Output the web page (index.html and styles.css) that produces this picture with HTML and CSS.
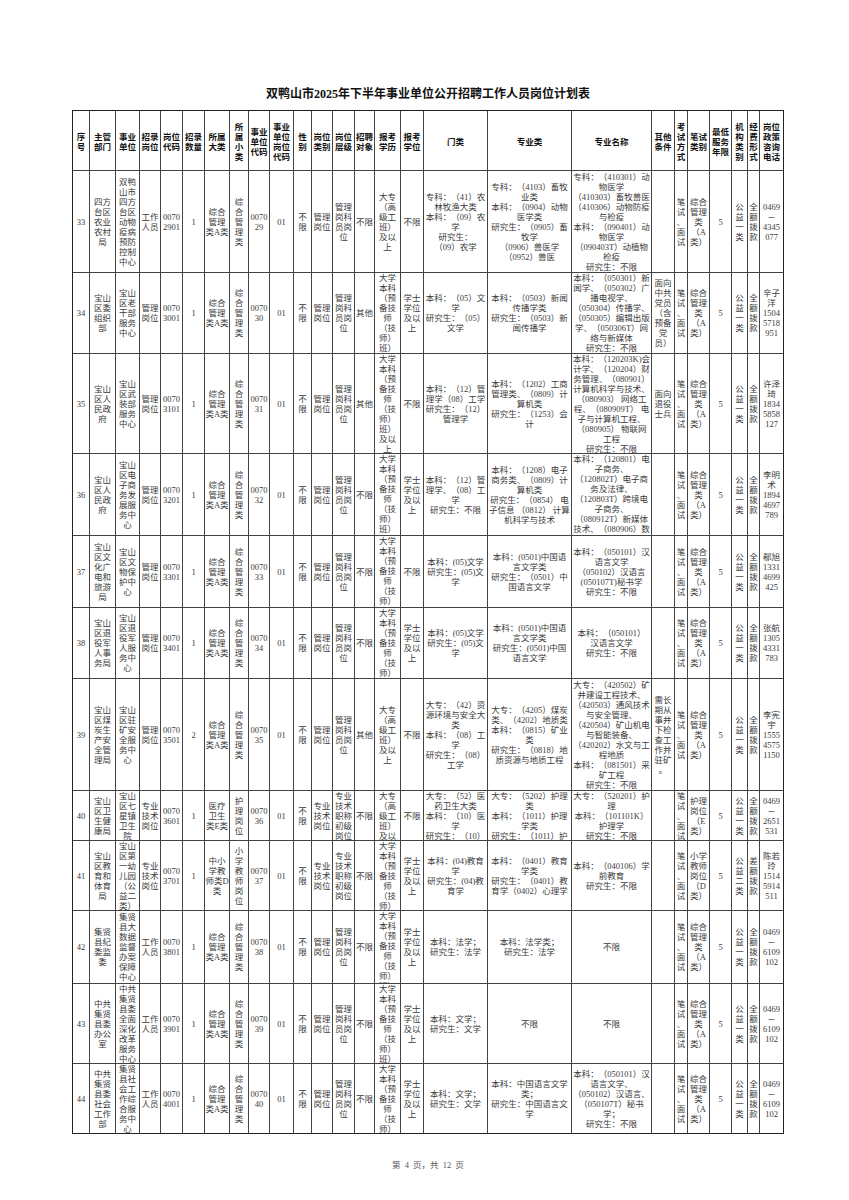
FILE: index.html
```html
<!DOCTYPE html>
<html lang="zh-CN">
<head>
<meta charset="utf-8">
<title>双鸭山市2025年下半年事业单位公开招聘工作人员岗位计划表</title>
<link rel="stylesheet" href="styles.css">
</head>
<body>
<div class="page">
  <h1 class="title">双鸭山市2025年下半年事业单位公开招聘工作人员岗位计划表</h1>
  <div class="tbl">
    <div class="h">序<br>号</div>
    <div class="h">主管<br>部门</div>
    <div class="h">事业<br>单位</div>
    <div class="h">招录<br>岗位</div>
    <div class="h">岗位<br>代码</div>
    <div class="h">招录<br>数量</div>
    <div class="h">所属<br>大类</div>
    <div class="h">所<br>属<br>小<br>类</div>
    <div class="h">事业<br>单位<br>代码</div>
    <div class="h">事业<br>单位<br>岗位<br>代码</div>
    <div class="h">性<br>别</div>
    <div class="h">岗位<br>类别</div>
    <div class="h">岗位<br>层级</div>
    <div class="h">招聘<br>对象</div>
    <div class="h">报考<br>学历</div>
    <div class="h">报考<br>学位</div>
    <div class="h">门类</div>
    <div class="h">专业类</div>
    <div class="h">专业名称</div>
    <div class="h">其他<br>条件</div>
    <div class="h">考<br>试<br>方<br>式</div>
    <div class="h">笔试<br>类别</div>
    <div class="h">最低<br>服务<br>年限</div>
    <div class="h">机<br>构<br>类<br>别</div>
    <div class="h">经<br>费<br>形<br>式</div>
    <div class="h">岗位<br>政策<br>咨询<br>电话</div>

    <!-- 33 -->
    <div>33</div>
    <div>四方台区农业农村局</div>
    <div>双鸭山市四方台区动物疫病预防控制中心</div>
    <div>工作人员</div>
    <div>0070<br>2901</div>
    <div>1</div>
    <div>综合管理类A类</div>
    <div>综合管理类</div>
    <div>0070<br>29</div>
    <div>01</div>
    <div>不限</div>
    <div>管理岗位</div>
    <div>管理岗科员岗位</div>
    <div>不限</div>
    <div>大专（高级工班）及以上</div>
    <div>不限</div>
    <div>专科：（41）农林牧渔大类<br>本科：（09）农学<br>研究生：<br>（09）农学</div>
    <div>专科：（4103）畜牧业类<br>本科：（0904）动物医学类<br>研究生：（0905）畜牧学<br>（0906）兽医学<br>（0952）兽医</div>
    <div>专科：（410301）动物医学<br>（410303）畜牧兽医<br>（410306）动物防疫与检疫<br>本科：（090401）动物医学<br>（090403T）动植物检疫<br>研究生：不限</div>
    <div></div>
    <div>笔试、面试</div>
    <div>综合管理类（A类）</div>
    <div>5</div>
    <div>公益一类</div>
    <div>全额拨款</div>
    <div>0469<br>－<br>4345<br>077</div>

    <!-- 34 -->
    <div>34</div>
    <div>宝山区委组织部</div>
    <div>宝山区老干部服务中心</div>
    <div>管理岗位</div>
    <div>0070<br>3001</div>
    <div>1</div>
    <div>综合管理类A类</div>
    <div>综合管理类</div>
    <div>0070<br>30</div>
    <div>01</div>
    <div>不限</div>
    <div>管理岗位</div>
    <div>管理岗科员岗位</div>
    <div>其他</div>
    <div>大学本科（预备技师（技师）班）及以上</div>
    <div>学士学位及以上</div>
    <div>本科：（05）文学<br>研究生：（05）文学</div>
    <div>本科：（0503）新闻传播学类<br>研究生：（0503）新闻传播学</div>
    <div>本科：（050301）新闻学、（050302）广播电视学、（050304）传播学、（050305）编辑出版学、（050306T）网络与新媒体<br>研究生：不限</div>
    <div>面向中共党员（含预备党员）</div>
    <div>笔试、面试</div>
    <div>综合管理类（A类）</div>
    <div>5</div>
    <div>公益一类</div>
    <div>全额拨款</div>
    <div>辛子洋<br>1504<br>5718<br>951</div>

    <!-- 35 -->
    <div>35</div>
    <div>宝山区人民政府</div>
    <div>宝山区武装部服务中心</div>
    <div>管理岗位</div>
    <div>0070<br>3101</div>
    <div>1</div>
    <div>综合管理类A类</div>
    <div>综合管理类</div>
    <div>0070<br>31</div>
    <div>01</div>
    <div>不限</div>
    <div>管理岗位</div>
    <div>管理岗科员岗位</div>
    <div>其他</div>
    <div>大学本科（预备技师（技师）班）及以上</div>
    <div>不限</div>
    <div>本科：（12）管理学（08）工学<br>研究生：（12）管理学</div>
    <div>本科：（1202）工商管理类、（0809）计算机类<br>研究生：（1253）会计</div>
    <div>本科：（120203K)会计学、（120204）财务管理、（080901）计算机科学与技术、（080903） 网络工程、（080909T） 电子与计算机工程、（080905） 物联网工程<br>研究生：不限</div>
    <div>面向退役士兵</div>
    <div>笔试、面试</div>
    <div>综合管理类（A类）</div>
    <div>5</div>
    <div>公益一类</div>
    <div>全额拨款</div>
    <div>许泽琦<br>1834<br>5858<br>127</div>

    <!-- 36 -->
    <div>36</div>
    <div>宝山区人民政府</div>
    <div>宝山区电子商务发展服务中心</div>
    <div>管理岗位</div>
    <div>0070<br>3201</div>
    <div>1</div>
    <div>综合管理类A类</div>
    <div>综合管理类</div>
    <div>0070<br>32</div>
    <div>01</div>
    <div>不限</div>
    <div>管理岗位</div>
    <div>管理岗科员岗位</div>
    <div>不限</div>
    <div>大学本科（预备技师（技师）班）及以上</div>
    <div>学士学位及以上</div>
    <div>本科：（12）管理学、（08）工学<br>研究生：不限</div>
    <div>本科：（1208）电子商务类、（0809）计算机类<br>研究生：（0854） 电子信息 （0812） 计算机科学与技术</div>
    <div>本科：（120801）电子商务、（120802T）电子商务及法律、（120803T）跨境电子商务、（080912T）新媒体技术、（080906）数字媒体技术<br>研究生：不限</div>
    <div></div>
    <div>笔试、面试</div>
    <div>综合管理类（A类）</div>
    <div>5</div>
    <div>公益一类</div>
    <div>全额拨款</div>
    <div>李明术<br>1894<br>4697<br>789</div>

    <!-- 37 -->
    <div>37</div>
    <div>宝山区文化广电和旅游局</div>
    <div>宝山区文物保护中心</div>
    <div>管理岗位</div>
    <div>0070<br>3301</div>
    <div>1</div>
    <div>综合管理类A类</div>
    <div>综合管理类</div>
    <div>0070<br>33</div>
    <div>01</div>
    <div>不限</div>
    <div>管理岗位</div>
    <div>管理岗科员岗位</div>
    <div>不限</div>
    <div>大学本科（预备技师（技师）班）及以上</div>
    <div>不限</div>
    <div>本科：(05)文学<br>研究生：(05)文学</div>
    <div>本科：(0501)中国语言文学类<br>研究生：（0501）中国语言文学</div>
    <div>本科：（050101）汉语言文学<br>（050102）汉语言<br>(050107T)秘书学<br>研究生：不限</div>
    <div></div>
    <div>笔试、面试</div>
    <div>综合管理类（A类）</div>
    <div>5</div>
    <div>公益一类</div>
    <div>全额拨款</div>
    <div>郗旭<br>1331<br>4699<br>425</div>

    <!-- 38 -->
    <div>38</div>
    <div>宝山区退役军人事务局</div>
    <div>宝山区退役军人服务中心</div>
    <div>管理岗位</div>
    <div>0070<br>3401</div>
    <div>1</div>
    <div>综合管理类A类</div>
    <div>综合管理类</div>
    <div>0070<br>34</div>
    <div>01</div>
    <div>不限</div>
    <div>管理岗位</div>
    <div>管理岗科员岗位</div>
    <div>不限</div>
    <div>大学本科（预备技师（技师）班）及以上</div>
    <div>学士学位及以上</div>
    <div>本科：(05)文学<br>研究生：(05)文学</div>
    <div>本科：(0501)中国语言文学类<br>研究生：(0501)中国语言文学</div>
    <div>本科：（050101）<br>汉语言文学<br>研究生：不限</div>
    <div></div>
    <div>笔试、面试</div>
    <div>综合管理类（A类）</div>
    <div>5</div>
    <div>公益一类</div>
    <div>全额拨款</div>
    <div>张航<br>1305<br>4331<br>783</div>

    <!-- 39 -->
    <div>39</div>
    <div>宝山区煤炭生产安全管理局</div>
    <div>宝山区驻矿安全服务中心</div>
    <div>管理岗位</div>
    <div>0070<br>3501</div>
    <div>2</div>
    <div>综合管理类A类</div>
    <div>综合管理类</div>
    <div>0070<br>35</div>
    <div>01</div>
    <div>不限</div>
    <div>管理岗位</div>
    <div>管理岗科员岗位</div>
    <div>其他</div>
    <div>大专（高级工班）及以上</div>
    <div>不限</div>
    <div>大专：（42）资源环境与安全大类<br>本科：（08）工学<br>研究生：（08）工学</div>
    <div>大专：（4205）煤炭类、（4202）地质类<br>本科：（0815）矿业类<br>研究生：（0818）地质资源与地质工程</div>
    <div>大专：（420502）矿井建设工程技术、（420503）通风技术与安全管理、（420504）矿山机电与智能装备、（420202）水文与工程地质<br>本科：（081501）采矿工程<br>研究生：不限</div>
    <div>需长期从事井下检查工作并驻矿<br>。</div>
    <div>笔试、面试</div>
    <div>综合管理类（A类）</div>
    <div>5</div>
    <div>公益一类</div>
    <div>全额拨款</div>
    <div>李宪宇<br>1555<br>4575<br>1150</div>

    <!-- 40 -->
    <div>40</div>
    <div>宝山区卫生健康局</div>
    <div>宝山区七星镇卫生院</div>
    <div>专业技术岗位</div>
    <div>0070<br>3601</div>
    <div>1</div>
    <div>医疗卫生类E类</div>
    <div>护理岗位</div>
    <div>0070<br>36</div>
    <div>01</div>
    <div>不限</div>
    <div>专业技术岗位</div>
    <div>专业技术职称初级岗位</div>
    <div>不限</div>
    <div>大专（高级工班）及以上</div>
    <div>不限</div>
    <div>大专：（52）医药卫生大类<br>本科：（10）医学<br>研究生：（10）医学</div>
    <div>大专：（5202）护理类<br>本科：（1011）护理学类<br>研究生：（1011）护理学</div>
    <div>大专：（520201）护理<br>本科：（101101K）<br>护理学<br>研究生：不限</div>
    <div></div>
    <div>笔试、面试</div>
    <div>护理岗位（E类）</div>
    <div>5</div>
    <div>公益一类</div>
    <div>全额拨款</div>
    <div>0469<br>－<br>2651<br>531</div>

    <!-- 41 -->
    <div>41</div>
    <div>宝山区教育和体育局</div>
    <div>宝山区第一幼儿园（公益二类）</div>
    <div>专业技术岗位</div>
    <div>0070<br>3701</div>
    <div>1</div>
    <div>中小学教师类D类</div>
    <div>小学教师岗位</div>
    <div>0070<br>37</div>
    <div>01</div>
    <div>不限</div>
    <div>专业技术岗位</div>
    <div>专业技术职称初级岗位</div>
    <div>不限</div>
    <div>大学本科（预备技师（技师）班）及以上</div>
    <div>学士学位及以上</div>
    <div>本科：(04)教育学<br>研究生：(04)教育学</div>
    <div>本科：（0401）教育学类<br>研究生：（0401）教育学（0402）心理学</div>
    <div>本科：（040106）学前教育<br>研究生：不限</div>
    <div></div>
    <div>笔试、面试</div>
    <div>小学教师岗位（D类）</div>
    <div>5</div>
    <div>公益二类</div>
    <div>差额拨款</div>
    <div>陈若玲<br>1514<br>5914<br>511</div>

    <!-- 42 -->
    <div>42</div>
    <div>集贤县纪委监委</div>
    <div>集贤县大数据监督办案保障中心</div>
    <div>工作人员</div>
    <div>0070<br>3801</div>
    <div>1</div>
    <div>综合管理类A类</div>
    <div>综合管理类</div>
    <div>0070<br>38</div>
    <div>01</div>
    <div>不限</div>
    <div>管理岗位</div>
    <div>管理岗科员岗位</div>
    <div>不限</div>
    <div>大学本科（预备技师（技师）班）及以上</div>
    <div>学士学位及以上</div>
    <div>本科：法学；<br>研究生：法学</div>
    <div>本科：法学类；<br>研究生：法学</div>
    <div>不限</div>
    <div></div>
    <div>笔试、面试</div>
    <div>综合管理类（A类）</div>
    <div>5</div>
    <div>公益一类</div>
    <div>全额拨款</div>
    <div>0469<br>－<br>6109<br>102</div>

    <!-- 43 -->
    <div>43</div>
    <div>中共集贤县委办公室</div>
    <div>中共集贤县委全面深化改革服务中心</div>
    <div>工作人员</div>
    <div>0070<br>3901</div>
    <div>1</div>
    <div>综合管理类A类</div>
    <div>综合管理类</div>
    <div>0070<br>39</div>
    <div>01</div>
    <div>不限</div>
    <div>管理岗位</div>
    <div>管理岗科员岗位</div>
    <div>不限</div>
    <div>大学本科（预备技师（技师）班）及以上</div>
    <div>学士学位及以上</div>
    <div>本科：文学；<br>研究生：文学</div>
    <div>不限</div>
    <div>不限</div>
    <div></div>
    <div>笔试、面试</div>
    <div>综合管理类（A类）</div>
    <div>5</div>
    <div>公益一类</div>
    <div>全额拨款</div>
    <div>0469<br>－<br>6109<br>102</div>

    <!-- 44 -->
    <div>44</div>
    <div>中共集贤县委社会工作部</div>
    <div>集贤县社会工作综合服务中心</div>
    <div>工作人员</div>
    <div>0070<br>4001</div>
    <div>1</div>
    <div>综合管理类A类</div>
    <div>综合管理类</div>
    <div>0070<br>40</div>
    <div>01</div>
    <div>不限</div>
    <div>管理岗位</div>
    <div>管理岗科员岗位</div>
    <div>不限</div>
    <div>大学本科（预备技师（技师）班）及以上</div>
    <div>学士学位及以上</div>
    <div>本科：文学；<br>研究生：文学</div>
    <div>本科：中国语言文学类；<br>研究生：中国语言文学</div>
    <div>本科：（050101）汉语言文学、（050102）汉语言、（050107T）秘书学；<br>研究生：不限</div>
    <div></div>
    <div>笔试、面试</div>
    <div>综合管理类（A类）</div>
    <div>5</div>
    <div>公益一类</div>
    <div>全额拨款</div>
    <div>0469<br>－<br>6109<br>102</div>
  </div>
  <p class="footer">第 4 页，共 12 页</p>
</div>
</body>
</html>
```

FILE: styles.css
```css
* { box-sizing: border-box; }

html, body {
  margin: 0;
  padding: 0;
  background: #ffffff;
}

body {
  font-family: "Liberation Serif", "Noto Sans CJK SC", serif;
  color: #3a3a3a;
  text-spacing-trim: space-all;
}

.page {
  width: 849px;
  padding: 87px 0 0 72px;
}

.title {
  width: 712px;
  margin: 0 0 9px 0;
  font-family: "Liberation Serif", "Noto Sans CJK SC", serif;
  font-size: 12px;
  line-height: 14px;
  font-weight: 700;
  color: #111111;
  text-align: center;
}

.tbl {
  display: grid;
  width: 712px;
  grid-template-columns: 17px 26px 24px 21px 22px 22px 25px 19px 21px 24px 18px 21px 22px 20px 26px 23px 64px 84px 80px 23px 13px 22px 22px 16px 12px 24px;
  grid-template-rows: 60px 102px 81px 100px 82px 72px 71px 112px 50px 70px 73px 80px 70px;
  border-left: 1px solid #222222;
  border-top: 1px solid #222222;
}

.tbl > div {
  border-right: 1px solid #444444;
  border-bottom: 1px solid #444444;
  overflow: hidden;
  display: flex;
  flex-direction: column;
  text-align: center;
  padding: 0 1px;
  font-size: 8.5px;
  line-height: 10px;
  overflow-wrap: anywhere;
  text-spacing-trim: space-all;
}

/* centre the text, but let overflowing text start at the top */
.tbl > div::before,
.tbl > div::after {
  content: "";
  flex: 1 1 0;
  min-height: 0;
}

/* 所属大类 needs the full width for "类A类" */
.tbl > div:nth-child(26n+7) {
  padding: 0;
}

/* columns that stack one character per line */
.tbl > div:nth-child(26n+8),
.tbl > div:nth-child(26n+11) {
  padding: 0 3px;
}

.tbl > div:nth-child(26n+26) {
  border-right-color: #222222;
}

.tbl > div:nth-last-child(-n+26) {
  border-bottom-color: #222222;
}

.tbl > .h {
  font-family: "Noto Sans CJK SC", sans-serif;
  font-weight: 700;
  color: #111111;
}

.footer {
  width: 712px;
  margin: 26px 0 0 0;
  text-align: center;
  font-size: 8.5px;
  line-height: 10px;
  color: #555555;
  word-spacing: 2px;
}
```
